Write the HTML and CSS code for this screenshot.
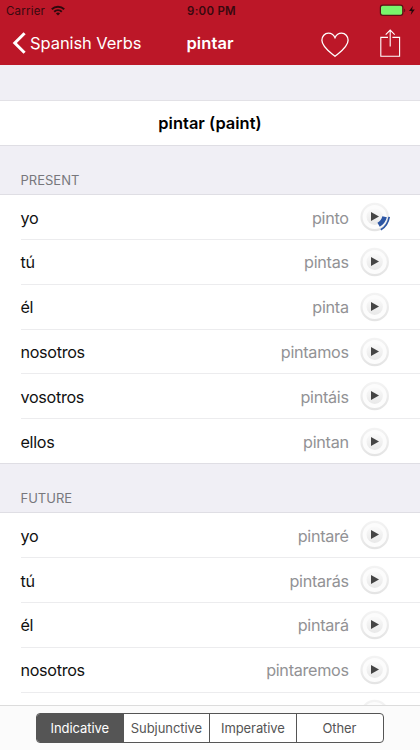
FILE: index.html
```
<!DOCTYPE html>
<html lang="en">
<head>
<meta charset="utf-8">
<title>pintar</title>
<link rel="stylesheet" href="styles.css">
</head>
<body>
<svg class="defs" width="0" height="0" aria-hidden="true">
  <defs>
    <linearGradient id="face" x1="0" y1="0" x2="0" y2="1"><stop offset="0" stop-color="#fafafa"/><stop offset="1" stop-color="#e8e8e8"/></linearGradient>
    <linearGradient id="rim" x1="0" y1="0" x2="0" y2="1"><stop offset="0" stop-color="#f3f3f3"/><stop offset="1" stop-color="#e4e4e4"/></linearGradient>
    <symbol id="play" viewBox="0 0 30 30">
      <circle cx="14.7" cy="15" r="13.2" fill="#fcfcfc" stroke="url(#rim)" stroke-width="2.2"/>
      <circle cx="14.7" cy="14.8" r="8.2" fill="url(#face)"/>
      <path d="M11 10v9l8-4.5z" fill="#444"/>
    </symbol>
  </defs>
</svg>
<div class="screen">
  <header class="top">
    <div class="status">
      <div class="carrier"><span>Carrier</span>
        <svg width="14" height="11" viewBox="0 0 14 11" fill="none" stroke="#2e090d" stroke-width="2"><path d="M.8 4.2a9 9 0 0 1 12.4 0M3.2 6.8a5.5 5.5 0 0 1 7.6 0"/><path d="M7 10.6 4.9 8.5a3 3 0 0 1 4.2 0z" fill="#2e090d" stroke="none"/></svg>
      </div>
      <span class="time">9:00 PM</span>
      <svg class="battery" width="37" height="13" viewBox="0 0 37 13"><rect x="1.4" y="1.2" width="22.4" height="10.2" rx="2.4" fill="#79f56c" stroke="#5a1015" stroke-width="1.2"/><path d="M25.2 4.4c1.4.5 1.4 3.3 0 3.8z" fill="#5a1015"/><path d="M34 1.8 30 7h2.7l-1 4 4.1-5.4H33z" fill="#25080a"/></svg>
    </div>
    <nav class="nav">
      <div class="back">
        <svg width="14" height="22" viewBox="0 0 14 22" fill="none" stroke="#fff" stroke-width="3"><path d="M12.6 1.2 2.8 11 12.6 20.8"/></svg>
        <span>Spanish Verbs</span>
      </div>
      <h1>pintar</h1>
      <div class="actions">
        <svg class="heart" width="28" height="26" viewBox="0 0 28 26" fill="none" stroke="#fff" stroke-width="1.3"><path d="M14 24.3C9.5 20.6.9 15.2.9 8.3.9 4.3 3.7 1.2 7.4 1.2c2.9 0 5.3 1.7 6.6 4.5 1.3-2.8 3.7-4.5 6.6-4.5 3.7 0 6.5 3.1 6.5 7.1 0 6.9-8.6 12.3-13.1 16z"/></svg>
        <svg width="21" height="29" viewBox="0 0 21 29" fill="none" stroke="#fff" stroke-width="1.1"><path d="M8 8.4H.8v18.8h18.8V8.4h-7.2M10.2 17.5V1.2M5.7 5.6l4.5-4.5 4.5 4.5"/></svg>
      </div>
    </nav>
  </header>
  <main>
    <h2 class="verb">pintar (paint)</h2>
    <h3>PRESENT</h3>
    <ul>
      <li><span>yo</span><b>pinto</b><span class="button"><svg class="play"><use href="#play"/></svg><svg class="waves" width="18" height="20" viewBox="0 0 18 20" fill="none" stroke="#2c56a4"><path d="M9.6 4.8Q8.4 10 3.6 12.8" stroke-width="4.6"/><path d="M14.2 4.8Q12.8 13.6 5.8 17.8" stroke-width="1.7"/></svg></span></li>
      <li><span>tú</span><b>pintas</b><svg class="play"><use href="#play"/></svg></li>
      <li><span>él</span><b>pinta</b><svg class="play"><use href="#play"/></svg></li>
      <li><span>nosotros</span><b>pintamos</b><svg class="play"><use href="#play"/></svg></li>
      <li><span>vosotros</span><b>pintáis</b><svg class="play"><use href="#play"/></svg></li>
      <li><span>ellos</span><b>pintan</b><svg class="play"><use href="#play"/></svg></li>
    </ul>
    <h3 class="later">FUTURE</h3>
    <ul>
      <li><span>yo</span><b>pintaré</b><svg class="play"><use href="#play"/></svg></li>
      <li><span>tú</span><b>pintarás</b><svg class="play"><use href="#play"/></svg></li>
      <li><span>él</span><b>pintará</b><svg class="play"><use href="#play"/></svg></li>
      <li><span>nosotros</span><b>pintaremos</b><svg class="play"><use href="#play"/></svg></li>
      <li><svg class="play last"><use href="#play"/></svg></li>
    </ul>
  </main>
  <footer>
    <div class="segments"><span class="active">Indicative</span><span>Subjunctive</span><span>Imperative</span><span>Other</span></div>
  </footer>
</div>
</body>
</html>
```

FILE: styles.css
```
* { box-sizing: border-box; }
body { margin: 0; font-family: Inter, "Liberation Sans", sans-serif; }
h1, h2, h3, ul { margin: 0; padding: 0; font-size: inherit; }
svg { display: block; flex: none; }
.defs { position: absolute; }
.screen { width: 420px; height: 750px; overflow: hidden; display: flex; flex-direction: column; background: #f0eff5; }
.top { height: 65px; flex: none; background: #bc1728; color: #fff; }
.status, .nav { display: grid; grid-template-columns: 1fr auto 1fr; align-items: center; }
.status { height: 21px; padding: 0 4px 0 6px; color: #38090f; font-size: 11.5px; }
.carrier { display: flex; align-items: center; gap: 6px; letter-spacing: .2px; }
.time { font-weight: 600; letter-spacing: .25px; padding-left: 1px; }
.battery { justify-self: end; }
.nav { height: 44px; padding: 0 19px 0 12px; }
.back { display: flex; align-items: center; gap: 4px; font-size: 16.5px; letter-spacing: -.08px; white-space: nowrap; width: 0; }
.nav h1 { font-size: 16.5px; font-weight: 600; letter-spacing: .1px; padding-left: 7px; }
.actions { display: flex; gap: 31px; justify-self: end; align-items: center; width: 80px; }
.heart { margin-top: 4px; }
main { height: 639.5px; padding-top: 35px; overflow: hidden; flex: none; }
.verb { height: 45.5px; display: flex; justify-content: center; align-items: center; background: #fff; border-top: 1px solid #e2e1e6; border-bottom: 1px solid #dfdee4; font-size: 16.4px; font-weight: 600; letter-spacing: .04px; }
h3 { height: 48.8px; padding: 26px 0 0 20.5px; color: #77777c; font-size: 13px; font-weight: 400; line-height: 16px; }
.later { padding-top: 26.6px; }
ul { list-style: none; background: #fff; border-top: 1px solid #dfdee4; border-bottom: 1px solid #dfdee4; height: 269.3px; }
li { height: 44.8px; display: flex; align-items: center; padding: 1px 30px 0 0; margin-left: 20.5px; border-bottom: 1px solid #ececee; font-size: 16.2px; letter-spacing: -.33px; color: #111; }
li:nth-child(6) { border-bottom: 0; }
li b { margin: 0 11.3px 0 auto; color: #929295; font-weight: 400; letter-spacing: -.3px; }
.play { width: 30px; height: 30px; margin-top: -1px; }
.last { margin-left: auto; }
.button { position: relative; }
.waves { position: absolute; left: 15px; top: 9px; }
footer { flex: 1; display: flex; justify-content: center; padding-top: 7.5px; background: #fbfbfb; border-top: 1px solid #dcdcdc; }
.segments { width: 348px; height: 30px; display: grid; grid-template-columns: repeat(4, 1fr); border: 1px solid #555; border-radius: 4px; overflow: hidden; background: #fff; font-size: 13px; letter-spacing: -.08px; color: #555; }
.segments span { display: flex; align-items: center; justify-content: center; padding-right: 1px; }
.segments span + span { border-left: 1px solid #555; margin-left: -.7px; }
.segments .active { background: #555; color: #fff; }
```
